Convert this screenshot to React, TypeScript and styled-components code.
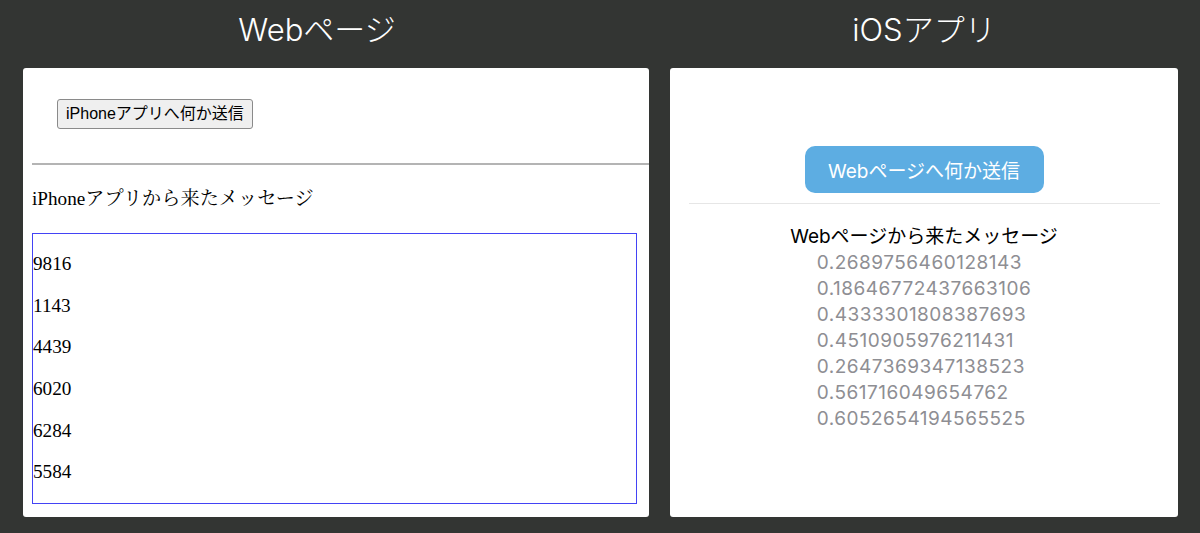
import React from "react";
import styled, { createGlobalStyle } from "styled-components";

const Global = createGlobalStyle`
  html, body { margin: 0; padding: 0; }
  body {
    background: #333533;
    width: 1200px;
    height: 533px;
    overflow: hidden;
  }
`;

const Page = styled.div`
  display: grid;
  grid-template-columns: 626px 508px;
  grid-template-rows: 68px 449px;
  column-gap: 21px;
  padding: 0 22px 16px 23px;
`;

const Title = styled.div<{ $shift?: number }>`
  display: flex;
  align-items: center;
  justify-content: center;
  padding-bottom: 8px;
  padding-right: ${(p) => p.$shift ?? 0}px;
  color: #ffffff;
  font-family: Inter, "Noto Sans CJK JP", sans-serif;
  font-weight: 300;
  font-size: 31px;
  line-height: 36px;
`;

const Panel = styled.div`
  background: #ffffff;
  border-radius: 3px;
  overflow: hidden;
  display: flex;
  flex-direction: column;
`;

const WebPanel = styled(Panel)`
  padding-left: 9px;
  font-family: "Liberation Serif", "Noto Serif CJK JP", "Noto Sans CJK JP", serif;
  color: #000;
`;

const ButtonRow = styled.div`
  display: flex;
  padding: 31px 0 0 25px;
`;

const HtmlButton = styled.button`
  height: 30px;
  padding: 0 8px;
  background: #efefef;
  border: 1px solid #8a8a8a;
  border-radius: 3px;
  font-family: "Liberation Sans", "Noto Sans CJK JP", sans-serif;
  font-size: 16px;
  line-height: 20px;
  color: #000;
`;

const Rule = styled.div`
  margin-top: 34px;
  height: 2px;
  background: #b4b4b4;
`;

const Heading = styled.div`
  margin-top: 23px;
  font-size: 19.2px;
  line-height: 22px;
`;

const MessageBox = styled.div`
  margin-top: 23px;
  width: 605px;
  box-sizing: border-box;
  border: 1px solid #4343f5;
`;

const Num = styled.p`
  margin: 19.2px 0;
  font-size: 19.2px;
  line-height: 22.4px;
`;

const AppPanel = styled(Panel)`
  align-items: center;
  padding-top: 78px;
  font-family: Inter, "Noto Sans CJK JP", sans-serif;
`;

const AppButton = styled.button`
  width: 239px;
  height: 47px;
  border: none;
  border-radius: 10px;
  background: #5dade2;
  color: #ffffff;
  font-family: Inter, "Noto Sans CJK JP", sans-serif;
  font-size: 19px;
  font-weight: 400;
`;

const Separator = styled.div`
  align-self: stretch;
  margin: 10px 18px 0 19px;
  height: 1px;
  background: #e6e6e6;
`;

const AppHeading = styled.div`
  margin-top: 20px;
  font-size: 19px;
  line-height: 26px;
  color: #000;
`;

const NumList = styled.div`
  display: flex;
  flex-direction: column;
  align-items: flex-start;
`;

const AppNum = styled.div`
  font-size: 19px;
  letter-spacing: 0.5px;
  line-height: 26px;
  color: #8e8e93;
`;

const webNums = ["9816", "1143", "4439", "6020", "6284", "5584"];
const appNums = [
  "0.2689756460128143",
  "0.18646772437663106",
  "0.4333301808387693",
  "0.4510905976211431",
  "0.2647369347138523",
  "0.561716049654762",
  "0.6052654194565525",
];

export default function App() {
  return (
    <>
      <Global />
      <Page>
        <Title $shift={38}>Webページ</Title>
        <Title>iOSアプリ</Title>
        <WebPanel>
          <ButtonRow>
            <HtmlButton>iPhoneアプリへ何か送信</HtmlButton>
          </ButtonRow>
          <Rule />
          <Heading>iPhoneアプリから来たメッセージ</Heading>
          <MessageBox>
            {webNums.map((n) => (
              <Num key={n}>{n}</Num>
            ))}
          </MessageBox>
        </WebPanel>
        <AppPanel>
          <AppButton>Webページへ何か送信</AppButton>
          <Separator />
          <AppHeading>Webページから来たメッセージ</AppHeading>
          <NumList>
            {appNums.map((n) => (
              <AppNum key={n}>{n}</AppNum>
            ))}
          </NumList>
        </AppPanel>
      </Page>
    </>
  );
}
